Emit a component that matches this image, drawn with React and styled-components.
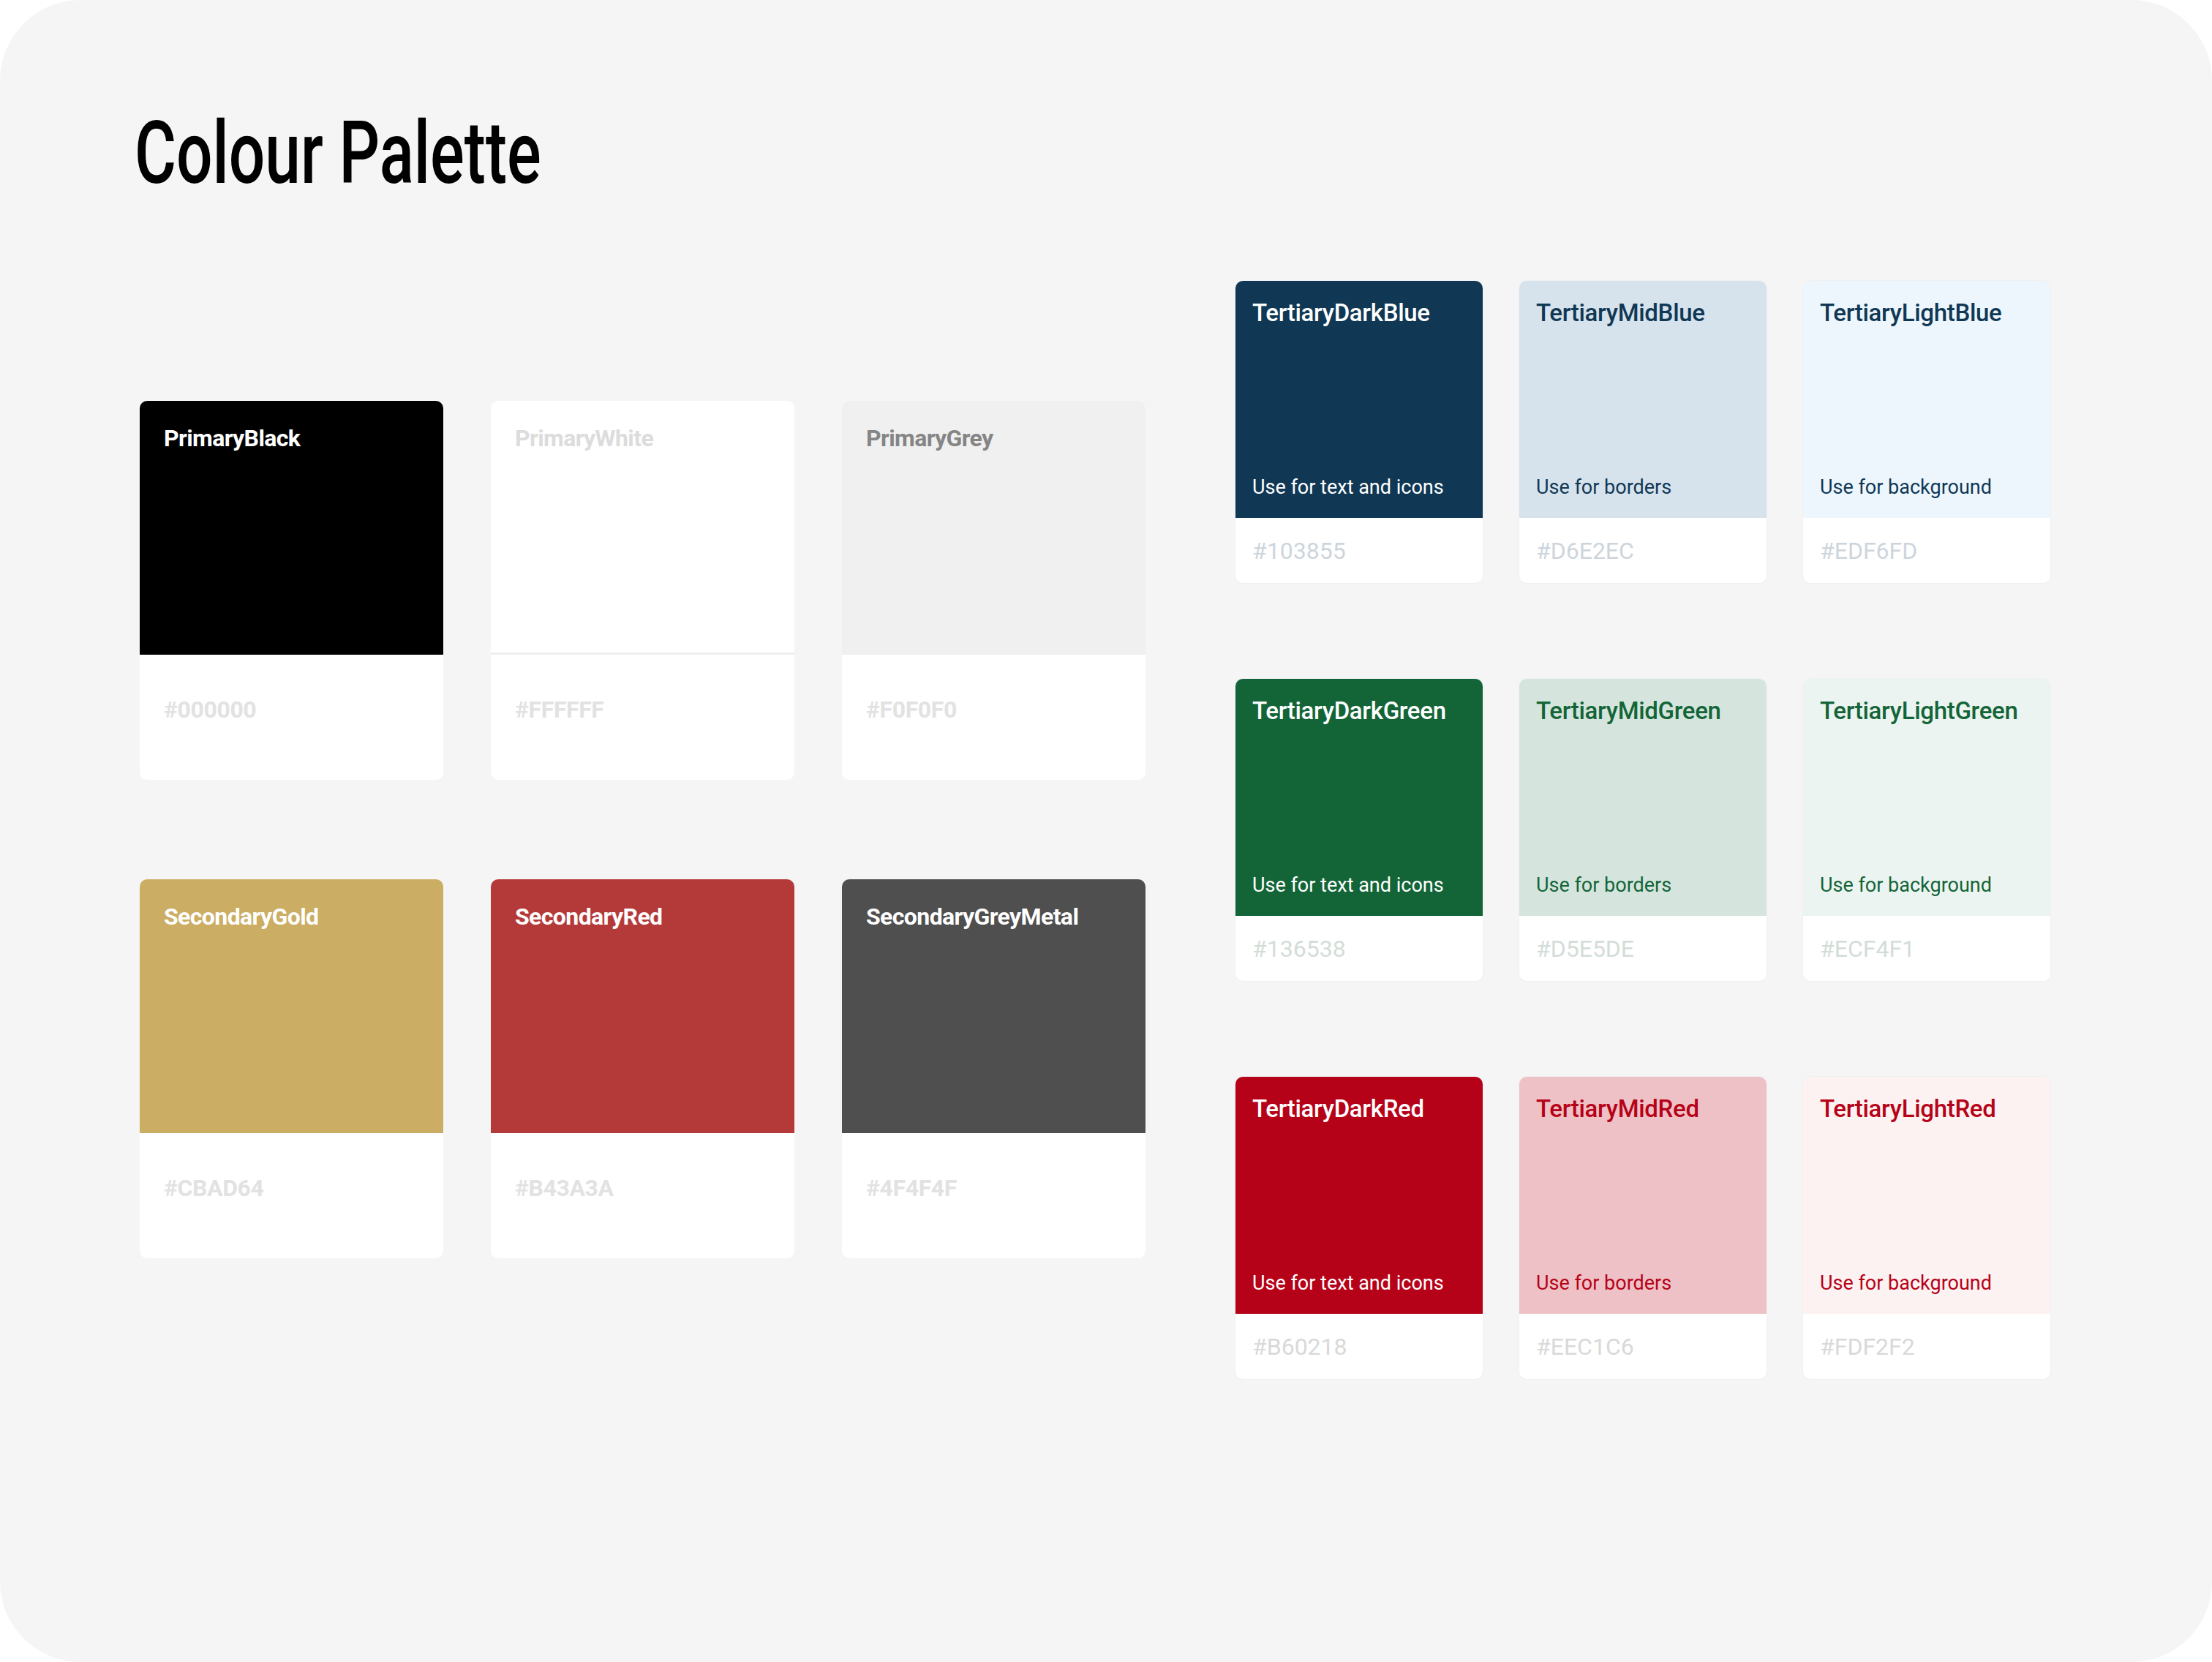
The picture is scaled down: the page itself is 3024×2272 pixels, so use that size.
import React from "react";
import styled, { createGlobalStyle } from "styled-components";

const Global = createGlobalStyle`
  html, body { margin: 0; padding: 0; background: #ffffff; }
  body { font-family: Roboto, "Liberation Sans", sans-serif; }
`;

const primary = [
  { name: "PrimaryBlack", hex: "#000000", bg: "#000000", fg: "#ffffff" },
  { name: "PrimaryWhite", hex: "#FFFFFF", bg: "#ffffff", fg: "#dcdcdc", line: true },
  { name: "PrimaryGrey", hex: "#F0F0F0", bg: "#f0f0f0", fg: "#858585" },
  { name: "SecondaryGold", hex: "#CBAD64", bg: "#cbad64", fg: "#ffffff" },
  { name: "SecondaryRed", hex: "#B43A3A", bg: "#b43a3a", fg: "#ffffff" },
  { name: "SecondaryGreyMetal", hex: "#4F4F4F", bg: "#4f4f4f", fg: "#ffffff" },
];

const families = [
  { n: "Blue", dark: "#103855", mid: "#D6E2EC", light: "#EDF6FD", hexFg: "#cdd5dc" },
  { n: "Green", dark: "#136538", mid: "#D5E5DE", light: "#ECF4F1", hexFg: "#d3ddd7" },
  { n: "Red", dark: "#B60218", mid: "#EEC1C6", light: "#FDF2F2", hexFg: "#d9d9d9" },
];

export default function App() {
  return (
    <>
      <Global />
      <Page>
        <Title>Colour Palette</Title>
        <Body>
          <PrimaryGrid>
            {primary.map((c) => (
              <BigCard key={c.name}>
                <BigSwatch $bg={c.bg} $line={c.line}>
                  <BigName $fg={c.fg}>{c.name}</BigName>
                </BigSwatch>
                <BigHex>{c.hex}</BigHex>
              </BigCard>
            ))}
          </PrimaryGrid>
          <TertiaryGrid>
            {families.map((f) =>
              [
                { k: "Dark", bg: f.dark, fg: "#ffffff", use: "Use for text and icons" },
                { k: "Mid", bg: f.mid, fg: f.dark, use: "Use for borders" },
                { k: "Light", bg: f.light, fg: f.dark, use: "Use for background" },
              ].map((s) => (
                <SmallCard key={f.n + s.k}>
                  <SmallSwatch $bg={s.bg}>
                    <SmallName $fg={s.fg}>{`Tertiary${s.k}${f.n}`}</SmallName>
                    <UseText $fg={s.fg}>{s.use}</UseText>
                  </SmallSwatch>
                  <SmallHex $fg={f.hexFg}>{s.bg}</SmallHex>
                </SmallCard>
              ))
            )}
          </TertiaryGrid>
        </Body>
      </Page>
    </>
  );
}

const Page = styled.div`
  width: 3024px;
  height: 2272px;
  box-sizing: border-box;
  background: #f5f5f5;
  border-radius: 110px;
  padding: 150px 0 0 184px;
`;

const Title = styled.h1`
  margin: 0;
  font-family: Roboto, "Liberation Sans", sans-serif;
  font-weight: 500;
  font-size: 118px;
  line-height: 120px;
  color: #000;
  transform: scaleX(0.74);
  transform-origin: left center;
  white-space: nowrap;
`;

const Body = styled.div`
  display: flex;
  align-items: flex-start;
  gap: 123px;
  margin-top: 114px;
  padding-left: 7px;
`;

const PrimaryGrid = styled.div`
  display: grid;
  grid-template-columns: repeat(3, 415px);
  column-gap: 65px;
  row-gap: 136px;
  margin-top: 164px;
`;

const BigCard = styled.div`
  height: 518px;
  background: #fff;
  border-radius: 10px;
  overflow: hidden;
  display: flex;
  flex-direction: column;
`;

const BigSwatch = styled.div`
  height: 347px;
  background: ${(p) => p.$bg};
  border-bottom: 3px solid ${(p) => (p.$line ? "#eeeeee" : "transparent")};
  padding: 32px 33px;
  box-sizing: border-box;
`;

const BigName = styled.div`
  font-weight: 700;
  font-size: 32px;
  letter-spacing: -0.6px;
  color: ${(p) => p.$fg};
`;

const BigHex = styled.div`
  padding: 56px 33px 0;
  font-weight: 700;
  font-size: 32px;
  letter-spacing: -0.4px;
  color: #e2e2e2;
`;

const TertiaryGrid = styled.div`
  display: grid;
  grid-template-columns: repeat(3, 338px);
  column-gap: 50px;
  row-gap: 131px;
`;

const SmallCard = styled.div`
  height: 413px;
  background: #fff;
  border-radius: 10px;
  overflow: hidden;
  box-shadow: 0 0 0 1px #eef0f2;
  display: flex;
  flex-direction: column;
`;

const SmallSwatch = styled.div`
  height: 324px;
  box-sizing: border-box;
  background: ${(p) => p.$bg};
  padding: 24px 23px 26px;
  display: flex;
  flex-direction: column;
  justify-content: space-between;
`;

const SmallName = styled.div`
  font-weight: 500;
  font-size: 33px;
  letter-spacing: -0.3px;
  color: ${(p) => p.$fg};
`;

const UseText = styled.div`
  font-size: 27px;
  color: ${(p) => p.$fg};
`;

const SmallHex = styled.div`
  padding: 26px 23px 0;
  font-size: 32px;
  color: ${(p) => p.$fg};
`;
